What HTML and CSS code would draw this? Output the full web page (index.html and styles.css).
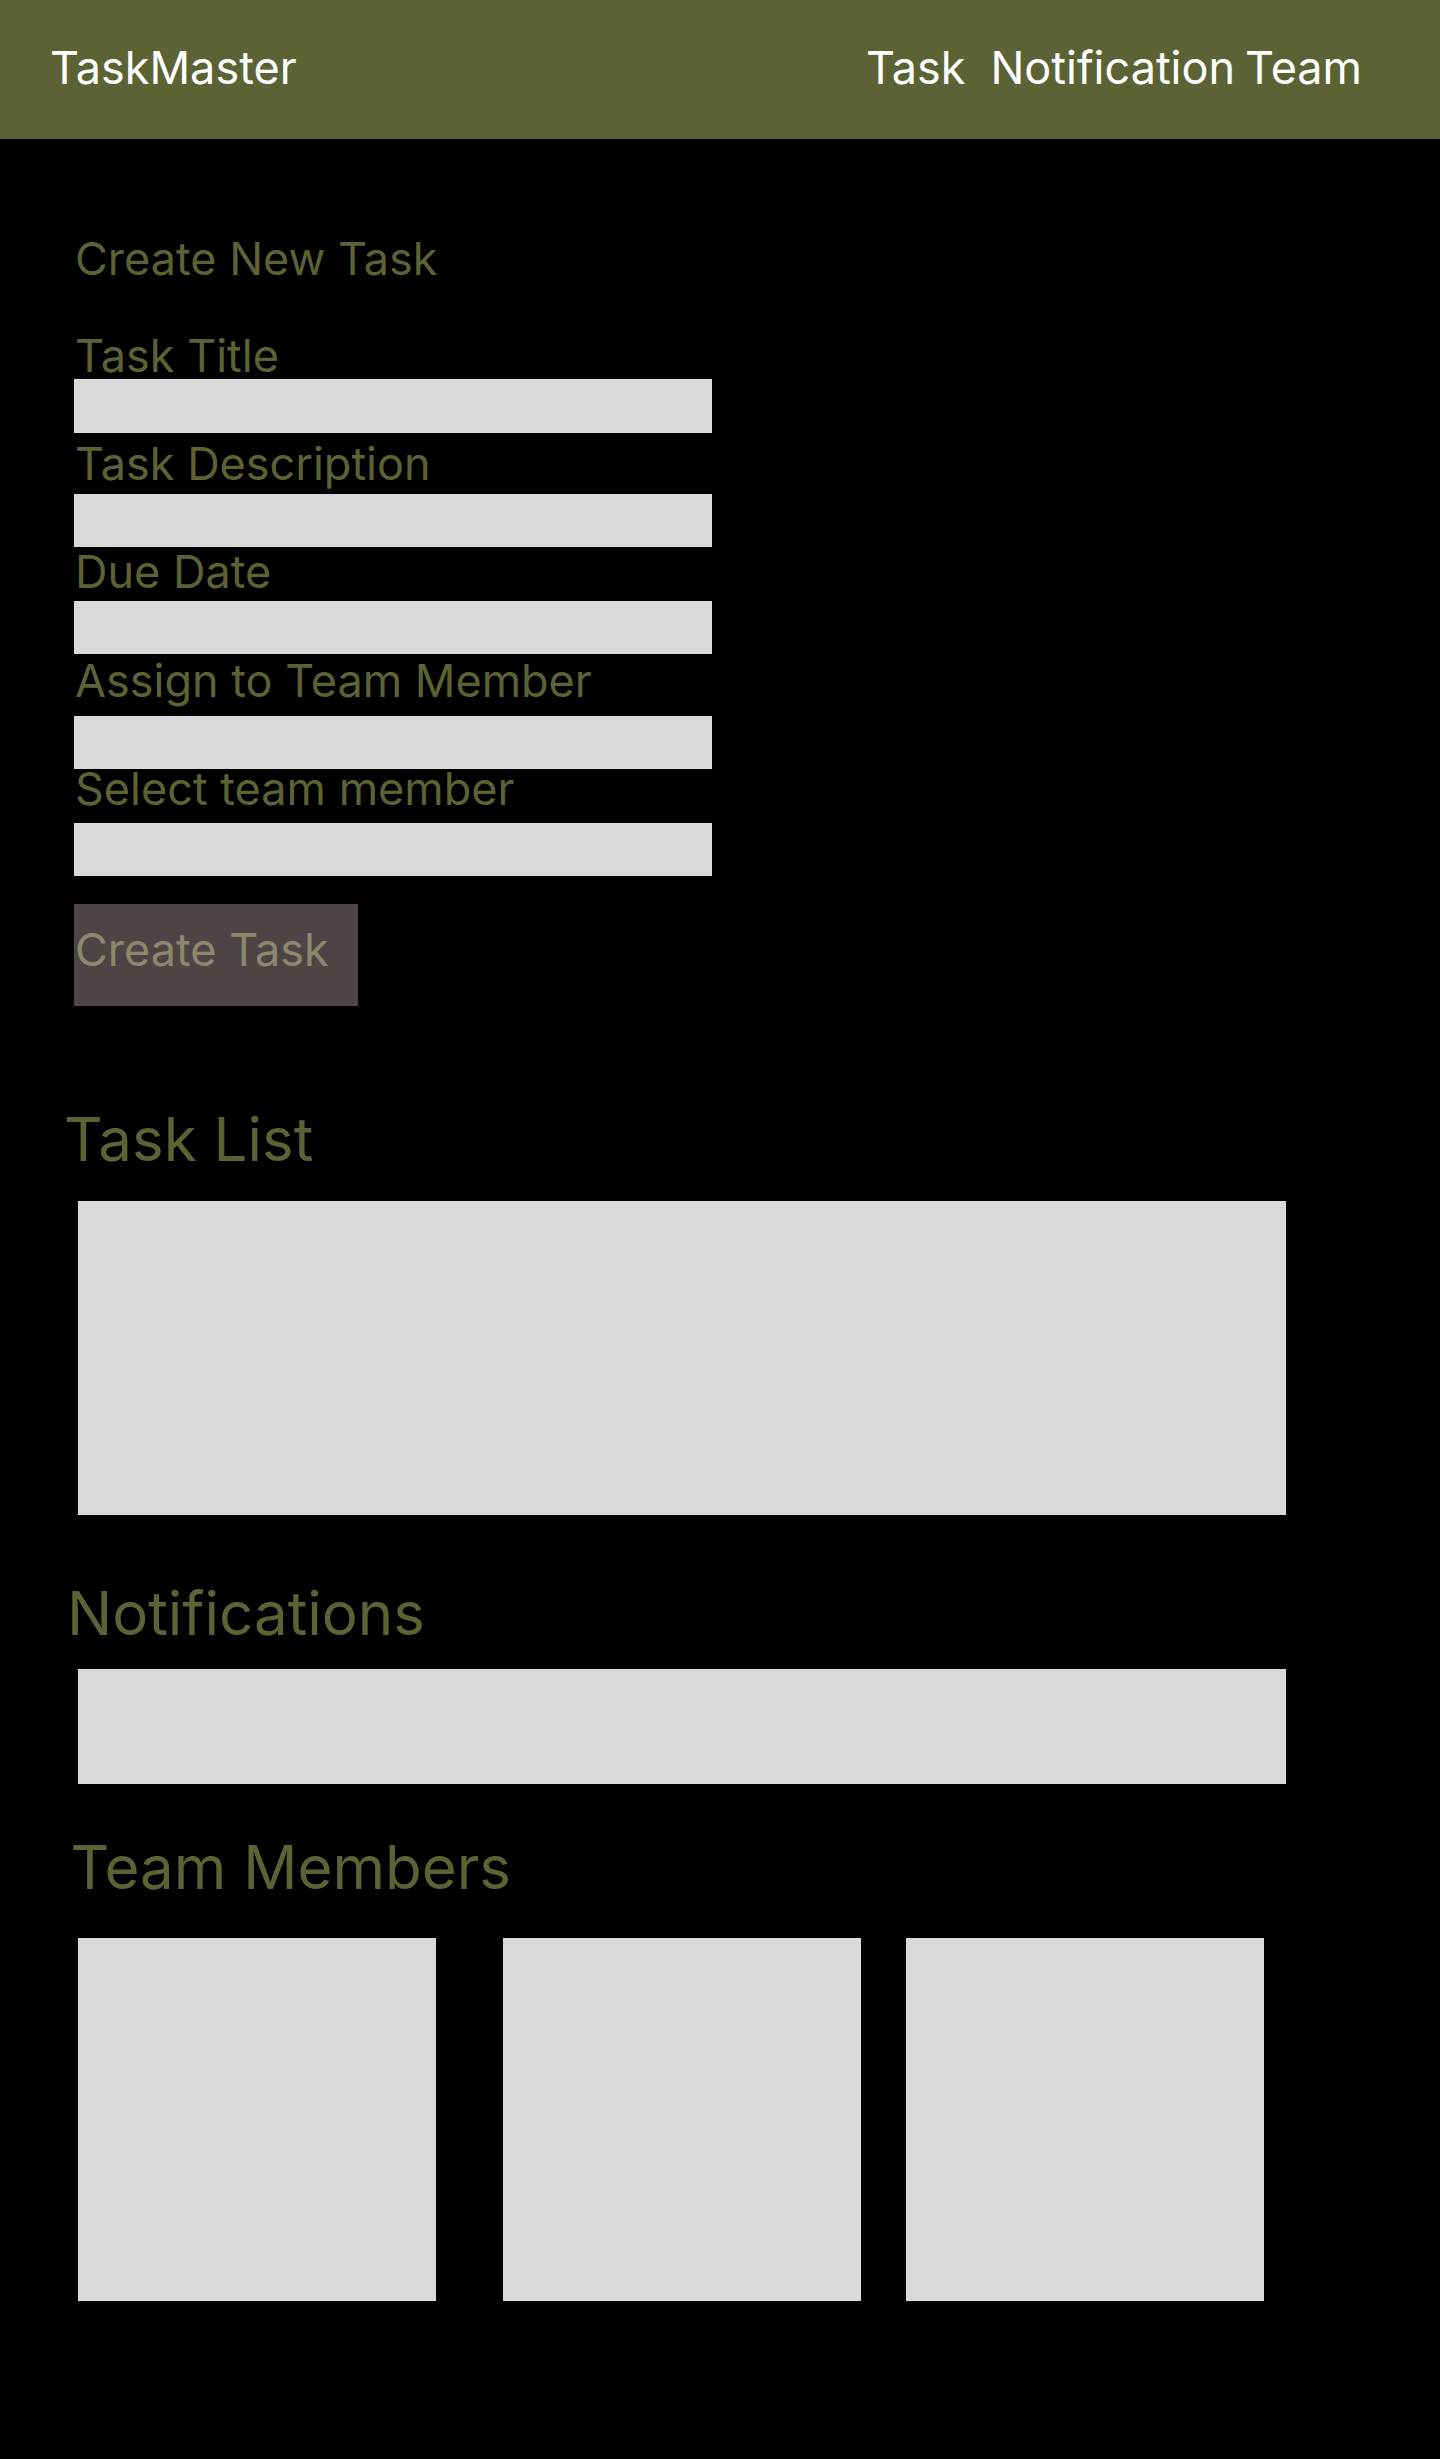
FILE: index.html
```html
<!DOCTYPE html>
<html lang="en">
<head>
<meta charset="utf-8">
<title>TaskMaster</title>
<link rel="stylesheet" href="styles.css">
</head>
<body>
<header class="topbar">
  <div class="logo">TaskMaster</div>
  <nav class="nav">
    <a class="nav-link nav-task" href="#tasks">Task</a>
    <a class="nav-link nav-notif" href="#notifications">Notification</a>
    <a class="nav-link nav-team" href="#team">Team</a>
  </nav>
</header>
<main class="main">
  <section class="create">
    <h2 class="create-title">Create New Task</h2>
    <form class="form">
      <label class="label label-1" for="t1">Task Title</label>
      <input class="field field-1" id="t1" type="text">
      <label class="label label-2" for="t2">Task Description</label>
      <input class="field field-2" id="t2" type="text">
      <label class="label label-3" for="t3">Due Date</label>
      <input class="field field-3" id="t3" type="text">
      <label class="label label-4" for="t4">Assign to Team Member</label>
      <input class="field field-4" id="t4" type="text">
      <label class="label label-5" for="t5">Select team member</label>
      <input class="field field-5" id="t5" type="text">
      <button class="btn" type="button">Create Task</button>
    </form>
  </section>
  <section class="panel panel-tasks" id="tasks">
    <h2 class="panel-title title-tasks">Task List</h2>
    <div class="box box-tasks"></div>
  </section>
  <section class="panel panel-notif" id="notifications">
    <h2 class="panel-title title-notif">Notifications</h2>
    <div class="box box-notif"></div>
  </section>
  <section class="panel panel-team" id="team">
    <h2 class="panel-title title-team">Team Members</h2>
    <div class="cards">
      <div class="card card-1"></div>
      <div class="card card-2"></div>
      <div class="card card-3"></div>
    </div>
  </section>
</main>
</body>
</html>
```

FILE: styles.css
```css
* { box-sizing: border-box; }
html, body { margin: 0; padding: 0; }
body {
  background: #000;
  font-family: Inter, "Noto Sans", sans-serif;
  min-height: 2459px;
}
.topbar {
  height: 139px;
  background: #5b6335;
  display: flex;
  justify-content: space-between;
  align-items: flex-start;
  padding: 41px 78px 0 50px;
  color: #fff;
  font-size: 45px;
  line-height: 54px;
}
.logo { font-weight: 400; }
.nav { display: flex; }
.nav-link { color: #fff; text-decoration: none; }
.nav-notif { margin-left: 25px; }
.nav-team { margin-left: 10px; }

.main { display: block; }
.create { padding: 99.5px 0 0 74px; }
.create-title {
  margin: 0;
  font-weight: 400;
  font-size: 45px;
  line-height: 40px;
  color: #5b6335;
  padding-left: 1px;
}
.form { display: flex; flex-direction: column; align-items: flex-start; margin-top: 57.7px; }
.label {
  display: block;
  font-size: 45px;
  line-height: 40px;
  color: #5b6335;
  padding-left: 1px;
}
.field {
  display: block;
  width: 638px;
  height: 53.5px;
  border: 0;
  margin: 0;
  padding: 0;
  background: #d9d9d9;
  outline: none;
}
.field-1 { margin-top: 3px; }
.label-2 { margin-top: 11.8px; }
.field-2 { margin-top: 9.4px; }
.label-3 { margin-top: 5.1px; }
.field-3 { margin-top: 8.4px; }
.label-4 { margin-top: 7.1px; }
.field-4 { margin-top: 14.4px; }
.label-5 { margin-top: 0.1px; }
.field-5 { margin-top: 13.4px; }
.btn {
  margin-top: 27.5px;
  width: 284px;
  height: 102px;
  border: 0;
  background: #4d4446;
  color: #8b896b;
  font-family: Inter, "Noto Sans", sans-serif;
  font-size: 45px;
  line-height: 54px;
  text-align: left;
  padding: 19px 0 29px 1px;
}

.panel { padding-left: 64px; }
.panel-title {
  margin: 0;
  font-weight: 400;
  font-size: 60px;
  line-height: 60px;
  color: #5b6335;
}
.title-notif { padding-left: 3px; }
.title-team { padding-left: 6.5px; }
.panel-tasks { margin-top: 103.4px; }
.panel-tasks .box { margin-top: 31.6px; height: 314px; }
.panel-notif { margin-top: 68.4px; }
.panel-notif .box { margin-top: 25.6px; height: 115px; }
.panel-team { margin-top: 53.4px; }
.box {
  margin-left: 14px;
  width: 1208px;
  background: #d9d9d9;
}
.cards {
  display: flex;
  margin-top: 40.6px;
  margin-left: 14px;
}
.card { width: 358px; height: 363px; background: #d9d9d9; }
.card-2 { margin-left: 67px; }
.card-3 { margin-left: 45px; }
```
